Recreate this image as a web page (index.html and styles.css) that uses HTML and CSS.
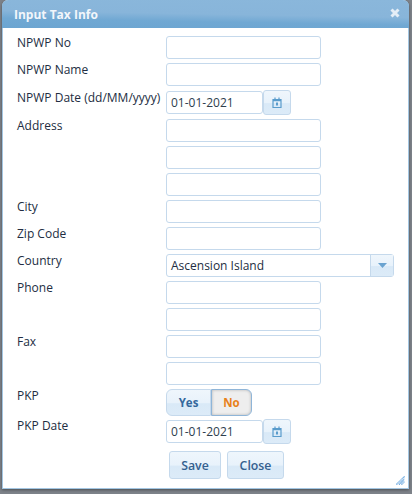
FILE: index.html
```html
<!DOCTYPE html>
<html lang="en">
<head>
<meta charset="utf-8">
<title>Input Tax Info</title>
<link rel="stylesheet" href="styles.css">
</head>
<body>
<div class="window">
  <div class="titlebar">
    <span class="title">Input Tax Info</span>
    <svg class="close" width="10" height="10" viewBox="0 0 10 10"><path d="M1.500 1.500l7 7M8.500 1.500l-7 7" stroke="#e4edf6" stroke-width="3" fill="none"/></svg>
  </div>
  <div class="content">
    <div class="row"><label>NPWP No</label><input class="text" type="text"></div>
    <div class="row"><label>NPWP Name</label><input class="text" type="text"></div>
    <div class="row date-row"><label>NPWP Date (dd/MM/yyyy)</label><div class="date"><input class="dateinput" type="text" value="01-01-2021"><span class="calbtn"><svg width="10" height="11" viewBox="0 0 10 11"><path d="M1 2.500h8v8h-8z" fill="none" stroke="#5a9ccc" stroke-width="1.200"/><path d="M1 3.500h8" stroke="#5a9ccc" stroke-width="1.500"/><path d="M3 0.500v2M7 0.500v2" stroke="#5a9ccc" stroke-width="1.200"/><rect x="4" y="5.500" width="2" height="3" fill="#5a9ccc"/></svg></span></div></div>
    <div class="row"><label>Address</label><input class="text" type="text"></div>
    <div class="row"><label></label><input class="text" type="text"></div>
    <div class="row"><label></label><input class="text" type="text"></div>
    <div class="row"><label>City</label><input class="text" type="text"></div>
    <div class="row"><label>Zip Code</label><input class="text" type="text"></div>
    <div class="row"><label>Country</label><div class="select"><span class="selval">Ascension Island</span><span class="selbtn"><svg width="9" height="5" viewBox="0 0 9 5"><path d="M0 0h9L4.500 5z" fill="#6aa3d0"/></svg></span></div></div>
    <div class="row"><label>Phone</label><input class="text" type="text"></div>
    <div class="row"><label></label><input class="text" type="text"></div>
    <div class="row"><label>Fax</label><input class="text" type="text"></div>
    <div class="row"><label></label><input class="text" type="text"></div>
    <div class="row toggle-row"><label>PKP</label><div class="toggle"><span class="yes">Yes</span><span class="no">No</span></div></div>
    <div class="row"><label class="pkp-date">PKP Date</label><div class="date"><input class="dateinput" type="text" value="01-01-2021"><span class="calbtn"><svg width="10" height="11" viewBox="0 0 10 11"><path d="M1 2.500h8v8h-8z" fill="none" stroke="#5a9ccc" stroke-width="1.200"/><path d="M1 3.500h8" stroke="#5a9ccc" stroke-width="1.500"/><path d="M3 0.500v2M7 0.500v2" stroke="#5a9ccc" stroke-width="1.200"/><rect x="4" y="5.500" width="2" height="3" fill="#5a9ccc"/></svg></span></div></div>
    <div class="actions"><button class="btn save">Save</button><button class="btn closebtn">Close</button></div>
    <svg class="grip" width="9" height="9" viewBox="0 0 9 9"><path d="M0.500 8.500L8.500 0.500M3 8.500L8.500 3M5.500 8.500L8.500 5.500" stroke="#3f8fd6" stroke-width="1.200" stroke-dasharray="1 0.500" fill="none"/></svg>
  </div>
</div>
</body>
</html>
```
FILE: styles.css
```css
* { box-sizing: border-box; }
html, body { margin: 0; height: 100%; overflow: hidden; }
body {
  width: 412px; height: 494px;
  background: #7d8289;
  padding: 0 3px 0 2px;
  font-family: "Open Sans", "DejaVu Sans", sans-serif;
  font-size: 12px;
  color: #222d42;
}
.window {
  height: 489px;
  background: #fff;
  border-radius: 6px 6px 0 0;
  box-shadow: 0 1px 3px rgba(0,0,0,.4);
  border: 1px solid #a3c6e2;
  border-top: 0;
}
.titlebar {
  height: 28px;
  margin: 0 -1px;
  background: linear-gradient(181deg, #8ab7db 0, #88b5da 50%, #70a8d3 72%, #6ca5d1 100%);
  display: flex; align-items: center; justify-content: space-between;
  padding: 0 9px 3px 12px;
  border-radius: 6px 6px 0 0;
}
.title { color: #f2f6fb; font-weight: 700; font-size: 12px; padding-top: 3px; }
.content { position: relative; padding: 8px 0 0 14px; height: 460px; }
.row { display: flex; height: 23px; margin-bottom: 4px; }
.row label { width: 149px; flex: none; line-height: 14px; }
.date-row { margin-bottom: 5px; margin-top: 5px; }
.text { width: 155px; height: 23px; border: 1px solid #c5d9ec; border-radius: 3px; background: #fff; padding: 0; }
.date { display: flex; align-items: flex-start; }
.dateinput { width: 97px; height: 23px; border: 1px solid #c5d9ec; border-radius: 3px; background: #fff; padding: 0 4px; font: inherit; font-size: 12px; color: #2e3e4e; }
.calbtn { width: 28px; height: 25px; margin-top: -1px; border: 1px solid #c5d9ec; border-radius: 3px; background: linear-gradient(#eff6fc, #e8f2fb 50%, #d9e9f7 55%, #dcebf8); display: flex; align-items: center; justify-content: center; }
.select { width: 228px; height: 23px; border: 1px solid #c5d9ec; border-radius: 3px; display: flex; }
.selval { flex: 1; line-height: 21px; padding-left: 4px; }
.selbtn { width: 23px; border-left: 1px solid #c5d9ec; background: linear-gradient(#eff6fc, #e8f2fb 50%, #d9e9f7 55%, #dcebf8); display: flex; align-items: center; justify-content: center; }
.toggle-row { height: 27px; margin-bottom: 4px; }
.toggle { display: flex; height: 27px; font-weight: 700; font-size: 11.500px; }
.toggle span { display: flex; align-items: center; justify-content: center; border: 1px solid #c5d9ec; }
.yes { width: 45px; color: #34689c; border-radius: 6px 0 0 6px; background: linear-gradient(#eff6fc, #e8f2fb 50%, #d9e9f7 55%, #dcebf8); }
.no { width: 41px; color: #e8811a; border-radius: 0 6px 6px 0; background: #eeeeee; border-color: #8fb5d8 !important; box-shadow: inset 0 0 3px rgba(0,0,0,.25); }
.pkp-date { margin-top: -1px; }
.actions { display: flex; gap: 6px; padding-left: 152px; margin-top: 8px; }
.btn { height: 28px; border: 1px solid #c5d9ec; border-radius: 3px; background: linear-gradient(#eff6fc, #e8f2fb 50%, #d9e9f7 55%, #dcebf8); color: #34608f; font: inherit; font-weight: 600; font-size: 12.300px; padding: 0; }
.save { width: 52px; }
.closebtn { width: 57px; }
.grip { position: absolute; right: 3px; bottom: 3px; }
```
